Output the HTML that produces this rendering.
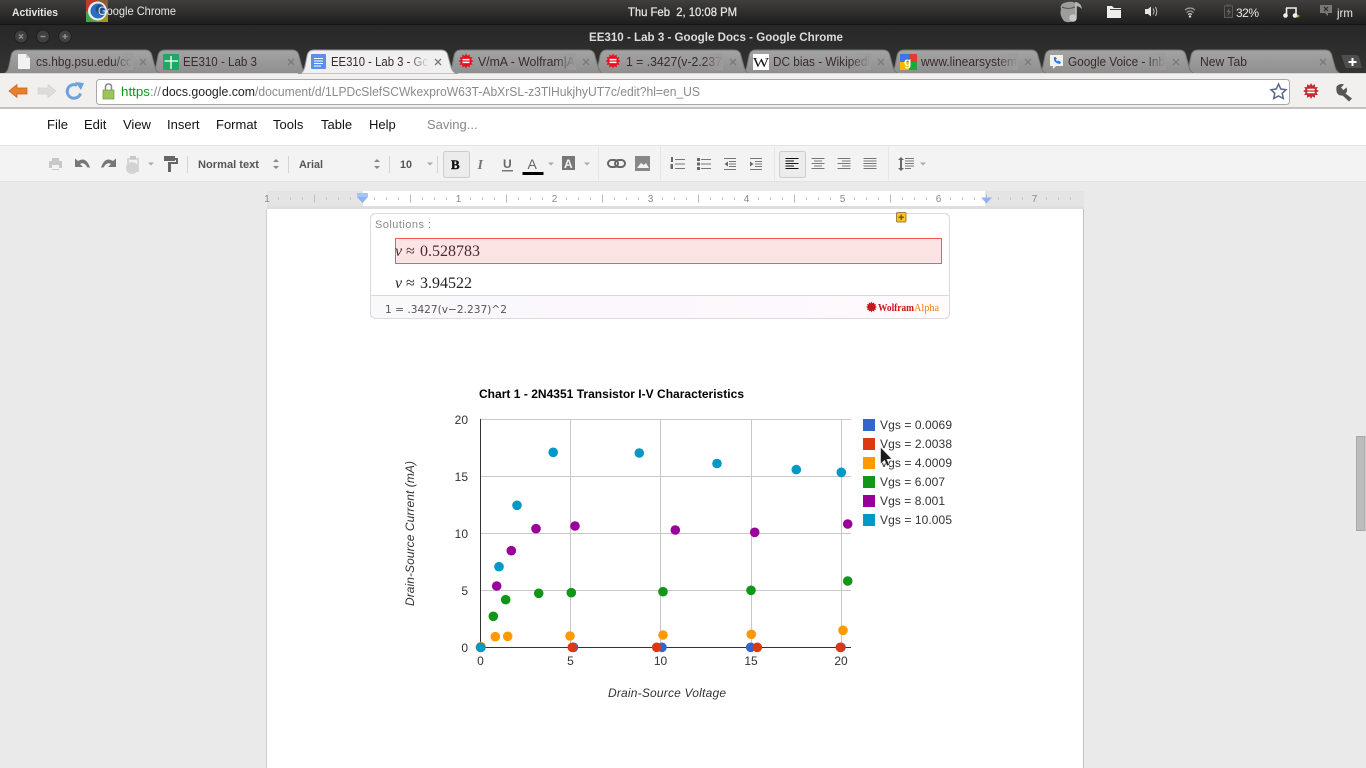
<!DOCTYPE html>
<html>
<head>
<meta charset="utf-8">
<title>EE310 - Lab 3 - Google Docs - Google Chrome</title>
<style>
html,body{margin:0;padding:0;width:1366px;height:768px;overflow:hidden;background:#eaeaea}
svg{display:block;position:absolute;left:0;top:0}
text{font-family:"Liberation Sans",sans-serif;white-space:pre}
.tab{font-size:13px;fill:#3a2a2c}
.mn{font-size:13px;fill:#111}
.ax{font-size:12px;fill:#333}
.lg{font-size:12px;fill:#333}
.rn{font-size:10px;fill:#888;text-anchor:middle}
.m{font-size:16px;font-family:"Liberation Serif",serif}
</style>
</head>
<body>
<svg width="1366" height="768" viewBox="0 0 1366 768" xmlns="http://www.w3.org/2000/svg">
<defs>
<linearGradient id="top" x1="0" y1="0" x2="0" y2="1"><stop offset="0" stop-color="#403f3c"/><stop offset="1" stop-color="#1d1d1c"/></linearGradient>
<linearGradient id="title" x1="0" y1="0" x2="0" y2="1"><stop offset="0" stop-color="#272727"/><stop offset="1" stop-color="#343433"/></linearGradient>
<linearGradient id="tabg" x1="0" y1="0" x2="0" y2="1"><stop offset="0" stop-color="#a4a4a4"/><stop offset="1" stop-color="#8e8e8e"/></linearGradient>
<linearGradient id="tabf" x1="0" y1="0" x2="1" y2="0"><stop offset="0" stop-color="#9b9b9b" stop-opacity="0"/><stop offset="1" stop-color="#9b9b9b"/></linearGradient>
<linearGradient id="actf" x1="0" y1="0" x2="1" y2="0"><stop offset="0" stop-color="#f0f0f0" stop-opacity="0"/><stop offset="1" stop-color="#f0f0f0"/></linearGradient>
<linearGradient id="foot" x1="0" y1="0" x2="1" y2="0"><stop offset="0" stop-color="#f9f8fb"/><stop offset=".5" stop-color="#fcf7fc"/><stop offset="1" stop-color="#fefafe"/></linearGradient>
<path id="tabshape" d="M-8 24C-3 24-1 21 0 16L2 6Q3 0 9 0H136Q142 0 143 6L146 17C147 21 150 24 154 24Z"/>
<path id="star" d="M7.5 0L5.12 1.37L6.5 3.75L3.75 3.75L3.75 6.5L1.37 5.12L0 7.5L-1.37 5.12L-3.75 6.5L-3.75 3.75L-6.5 3.75L-5.12 1.37L-7.5 0L-5.12 -1.37L-6.5 -3.75L-3.75 -3.75L-3.75 -6.5L-1.37 -5.12L0 -7.5L1.37 -5.12L3.75 -6.5L3.75 -3.75L6.5 -3.75L5.12 -1.37Z"/>
<path id="bars" d="M-3.5-1.400H3.500M-3.500 1.400H3.500" stroke="#fff" stroke-width="1.500" fill="none"/>
<path id="x" d="M-3-3L3 3M3-3L-3 3" fill="none" stroke="#7a7a7a" stroke-width="1.300"/>
<path id="ud" d="M-3-2L0-5L3-2ZM-3 2L0 5L3 2Z" fill="#888"/>
<path id="dd" d="M-3-1.500H3L0 1.500Z" fill="#aaa"/>
</defs>

<!-- top bar -->
<rect width="1366" height="25" fill="url(#top)"/>
<rect y="24" width="1366" height="1" fill="#161616"/>
<text x="12" y="16" font-size="11" font-weight="bold" fill="#e4e4e4" textLength="46" lengthAdjust="spacingAndGlyphs">Activities</text>
<rect x="86" y="0" width="11" height="11" fill="#c23a2c"/>
<rect x="86" y="11" width="11" height="11" fill="#44a346"/>
<rect x="97" y="11" width="11" height="11" fill="#a09422"/>
<rect x="97" y="0" width="11" height="11" fill="#8a5a30"/>
<circle cx="97.500" cy="11" r="9.500" fill="#e8eef4"/>
<circle cx="98" cy="11" r="7.500" fill="#2c6fc0"/>
<circle cx="100" cy="9" r="4.500" fill="#1f4e8a"/>
<text x="98" y="15" font-size="12" fill="#e6e6e6" textLength="78" lengthAdjust="spacingAndGlyphs">Google Chrome</text>
<text x="628" y="16" font-size="12" fill="#e6e6e6" stroke="#e6e6e6" stroke-width=".25" textLength="109" lengthAdjust="spacingAndGlyphs">Thu Feb  2, 10:08 PM</text>

<!-- tray -->
<path d="M1062 4Q1067 1 1073 2Q1077 3 1076 7Q1078 14 1074 20Q1069 24 1064 21Q1059 15 1061 9Q1060 6 1062 4Z" fill="#9d9d9d"/>
<path d="M1062 7Q1068 10 1075 7" fill="none" stroke="#555" stroke-width="1"/>
<path d="M1076 2V17" stroke="#c4c4c4" stroke-width="1.500"/><path d="M1076 2Q1081 3 1082 9Q1079 6 1076 6Z" fill="#b4b4b4"/><circle cx="1073" cy="18" r="3.800" fill="#c8c8c8"/>
<path d="M1107 6H1112L1114 8H1121V18H1107Z" fill="#eee"/><rect x="1110" y="9" width="11" height="1" fill="#444"/>
<path d="M1145 9H1148L1151 6.500V16.500L1148 14H1145Z" fill="#e6e6e6"/><path d="M1153 8.500Q1155 11.500 1153 14.500M1155.500 7Q1158 11.500 1155.500 16" fill="none" stroke="#bbb" stroke-width="1"/>
<path d="M1185 10Q1190 6 1195 10M1186.500 12.500Q1190 9.500 1193.500 12.500" fill="none" stroke="#999" stroke-width="1.300"/><path d="M1188 14.500Q1190 13 1192 14.500" fill="none" stroke="#ddd" stroke-width="1.300"/><circle cx="1190" cy="16.500" r="1.200" fill="#ddd"/>
<rect x="1224.500" y="6" width="8" height="11.500" fill="#333" stroke="#5a5a5a"/><rect x="1226.500" y="4.500" width="4" height="1.500" fill="#5a5a5a"/><path d="M1229.500 8L1226.500 12H1228.500L1227.500 16L1231 11H1229Z" fill="#666"/>
<text x="1236" y="17" font-size="12" fill="#e6e6e6" textLength="23" lengthAdjust="spacing">32%</text>
<path d="M1286 8H1296V15" fill="none" stroke="#eee" stroke-width="1.600"/><path d="M1286.500 8V15" stroke="#eee" stroke-width="1.600"/><circle cx="1285.500" cy="15.500" r="2.300" fill="#eee"/><circle cx="1295" cy="15.500" r="2.300" fill="#eee"/><path d="M1297 14V18L1300 16Z" fill="#7eb52a"/>
<path d="M1320 5H1332V13H1328V16L1325 13H1320Z" fill="#777"/><path d="M1324 7L1328 11M1328 7L1324 11" stroke="#2a2a2a" stroke-width="1.200"/>
<text x="1337" y="17" font-size="12" fill="#e6e6e6" textLength="16" lengthAdjust="spacingAndGlyphs">jrm</text>

<!-- title bar -->
<rect y="25" width="1366" height="49" fill="url(#title)"/>
<g fill="#404040" stroke="#202020"><circle cx="21" cy="36.500" r="6.500"/><circle cx="43" cy="36.500" r="6.500"/><circle cx="65" cy="36.500" r="6.500"/></g>
<path d="M19 34.500L23 38.500M23 34.500L19 38.500M40.500 36.500H45.500M62.500 36.500H67.500M65 34V39" stroke="#8e8e8e" stroke-width="1.500"/>
<text x="589" y="41" font-size="12" font-weight="bold" fill="#dcdcdc" textLength="254" lengthAdjust="spacingAndGlyphs">EE310 - Lab 3 - Google Docs - Google Chrome</text>

<!-- tabs -->
<g fill="url(#tabg)" stroke="#777" stroke-width="1">
<use href="#tabshape" x="1189" y="50"/>
<use href="#tabshape" x="1043" y="50"/>
<use href="#tabshape" x="895" y="50"/>
<use href="#tabshape" x="747" y="50"/>
<use href="#tabshape" x="598" y="50"/>
<use href="#tabshape" x="452" y="50"/>
<use href="#tabshape" x="156" y="50"/>
<use href="#tabshape" x="9" y="50"/>
</g>
<use href="#tabshape" x="305" y="50" fill="#f0f0f0" stroke="#999"/>
<rect y="73" width="298" height="1" fill="#d8d8d8"/><rect x="458" y="73" width="908" height="1" fill="#d8d8d8"/>

<path d="M18 54H26L30 58V69H18Z" fill="#f2f2f2"/><path d="M26 54V58H30" fill="#cfcfcf"/>
<rect x="163" y="54" width="16" height="16" rx="1" fill="#1ea866"/><path d="M171 56V69M164.500 61H178" stroke="#fff" stroke-width="1.300"/>
<rect x="311" y="54" width="15" height="15" rx="1" fill="#5b8fe8"/><path d="M314 58.500H323M314 61H323M314 63.500H323M314 66H321" stroke="#fff" stroke-width="1"/>
<g transform="translate(466 61)"><use href="#star" fill="#ea1020"/><use href="#bars"/></g>
<g transform="translate(613 61)"><use href="#star" fill="#ea1020"/><use href="#bars"/></g>
<rect x="753" y="54" width="16" height="16" fill="#fff"/>
<text x="753" y="67" font-size="14" fill="#111" style="font-family:'Liberation Serif',serif" textLength="16" lengthAdjust="spacingAndGlyphs">W</text>
<rect x="900" y="54" width="9" height="8" fill="#3a78e0"/><rect x="909" y="54" width="8" height="8" fill="#e03c30"/><rect x="900" y="62" width="9" height="8" fill="#f5b800"/><rect x="909" y="62" width="8" height="8" fill="#1ea83c"/>
<text x="904" y="66" font-size="12" font-weight="bold" fill="#fff">g</text>
<path d="M1050 55H1063V66H1056L1053 69V66H1050Z" fill="#f4f2e8"/><path d="M1054 57Q1053 63 1060 64L1061 62L1058 60.500L1057 61.500Q1056 60 1056 59.500L1057 58.500L1055.500 57Z" fill="#2f7ae0"/>

<text class="tab" x="36" y="66" textLength="96" lengthAdjust="spacingAndGlyphs">cs.hbg.psu.edu/cc</text>
<text class="tab" x="183" y="66" textLength="74" lengthAdjust="spacingAndGlyphs">EE310 - Lab 3</text>
<text class="tab" x="331" y="66" textLength="97" lengthAdjust="spacingAndGlyphs">EE310 - Lab 3 - Gc</text>
<text class="tab" x="478" y="66" textLength="97" lengthAdjust="spacingAndGlyphs">V/mA - Wolfram|A</text>
<text class="tab" x="626" y="66" textLength="96" lengthAdjust="spacingAndGlyphs">1 = .3427(v-2.237</text>
<text class="tab" x="773" y="66" textLength="97" lengthAdjust="spacingAndGlyphs">DC bias - Wikipedi</text>
<text class="tab" x="921" y="66" textLength="96" lengthAdjust="spacingAndGlyphs">www.linearsystem</text>
<text class="tab" x="1068" y="66" textLength="97" lengthAdjust="spacingAndGlyphs">Google Voice - Inb</text>
<text class="tab" x="1200" y="66" textLength="47" lengthAdjust="spacingAndGlyphs">New Tab</text>
<g fill="url(#tabf)">
<rect x="112" y="53" width="21" height="17"/><rect x="555" y="53" width="21" height="17"/><rect x="702" y="53" width="21" height="17"/><rect x="850" y="53" width="21" height="17"/><rect x="997" y="53" width="21" height="17"/><rect x="1145" y="53" width="21" height="17"/>
</g>
<rect x="408" y="53" width="21" height="17" fill="url(#actf)"/>
<use href="#x" x="143" y="62"/><use href="#x" x="291" y="62"/><use href="#x" x="438" y="62"/><use href="#x" x="586" y="62"/><use href="#x" x="733" y="62"/><use href="#x" x="881" y="62"/><use href="#x" x="1028" y="62"/><use href="#x" x="1176" y="62"/><use href="#x" x="1323" y="62"/>
<path d="M1341 55H1356Q1358 55 1359 57L1362 68H1347Q1345 68 1345 66Z" fill="#4e4e4e"/>
<path d="M1352.500 58V66M1348.500 62H1356.500" stroke="#fff" stroke-width="2"/>

<!-- browser toolbar -->
<rect y="74" width="1366" height="34" fill="#f1f0ef"/>
<rect y="107" width="1366" height="2" fill="#c2c2c2"/>
<path d="M9 91L17 84.500V88H27V94H17V97.500Z" fill="#e8802c" stroke="#c65f1a" stroke-width=".7"/>
<path d="M56 91L48 84.500V88H38V94H48V97.500Z" fill="#dcdcdc" stroke="#d0d0d0" stroke-width=".7"/>
<path d="M80.500 93.500A6.800 6.800 0 1 1 77 85.300" fill="none" stroke="#6ba4dc" stroke-width="3"/>
<path d="M75 82L84 83L81 90Z" fill="#6ba4dc"/>
<rect x="96.500" y="79.500" width="1193" height="25" rx="3" fill="#fff" stroke="#a8a8a8"/>
<path d="M105.500 90V87Q105.500 84 108.500 84Q111.500 84 111.500 87V90" fill="none" stroke="#888" stroke-width="1.500"/>
<rect x="103" y="90" width="11" height="9" fill="#9cc45c" stroke="#6e9a38" stroke-width=".7"/>
<text y="96" font-size="13"><tspan x="121" fill="#0a9a16" textLength="29" lengthAdjust="spacingAndGlyphs">https</tspan><tspan x="150" fill="#888">://</tspan><tspan x="162" fill="#222" textLength="93" lengthAdjust="spacingAndGlyphs">docs.google.com</tspan><tspan x="255" fill="#8a8a8a" textLength="445" lengthAdjust="spacingAndGlyphs">/document/d/1LPDcSlefSCWkexproW63T-AbXrSL-z3TlHukjhyUT7c/edit?hl=en_US</tspan></text>
<path d="M1278.500 84L1280.800 89L1286 89.700L1282.200 93.300L1283.300 98.500L1278.500 96L1273.700 98.500L1274.800 93.300L1271 89.700L1276.200 89Z" fill="#fff" stroke="#5c6a86" stroke-width="1.500"/>
<g transform="translate(1311 91) scale(1.050)"><use href="#star" fill="#c42a30"/><use href="#bars"/></g>
<path d="M1336.500 86.500Q1340 83 1344 84.500L1341 87.500L1343.500 90L1346.500 87.500Q1348 91.500 1345.500 93.500L1352 98.500L1349 101.500L1342.500 95.500Q1338.500 96 1336.800 92.500Q1336 89 1336.500 86.500Z" fill="#555"/>

<!-- docs menu -->
<rect y="109" width="1366" height="36" fill="#fff"/>
<rect y="145" width="1366" height="1" fill="#e4e4e4"/>
<rect y="146" width="1366" height="35" fill="#f3f3f3"/>
<rect y="181" width="1366" height="1" fill="#e2e2e2"/>
<text class="mn" x="47" y="129">File</text><text class="mn" x="84" y="129">Edit</text><text class="mn" x="123" y="129">View</text><text class="mn" x="167" y="129">Insert</text><text class="mn" x="216" y="129">Format</text><text class="mn" x="273" y="129">Tools</text><text class="mn" x="321" y="129">Table</text><text class="mn" x="369" y="129">Help</text>
<text x="427" y="129" font-size="13" fill="#888">Saving...</text>

<!-- docs toolbar -->
<path d="M52 158H59V161H62V168H59V170H52V168H49V161H52Z" fill="#c8c8c8"/><rect x="52" y="165" width="7" height="4" fill="#f3f3f3"/>
<path d="M75 158.500V167H83L80 164Q84 161.500 87.500 167.500H90Q86 156 78 161Z" fill="#777"/>
<path d="M116 158.500V167H108L111 164Q107 161.500 103.500 167.500H101Q105 156 113 161Z" fill="#777"/>
<rect x="127" y="158" width="12" height="14" fill="#d6d6d6"/><rect x="129" y="160" width="8" height="4" fill="#f3f3f3"/><rect x="130" y="156" width="6" height="3" fill="#c6c6c6"/><circle cx="132" cy="168" r="6" fill="#d2d2d2"/>
<use href="#dd" x="151" y="164"/>
<path d="M164 156H175V161H164Z" fill="#666"/><path d="M175 158H178V164H171V172H168V162H176V160H175Z" fill="#666"/>
<g fill="#d4d4d4"><rect x="187" y="156" width="1" height="17"/><rect x="288" y="156" width="1" height="17"/><rect x="389" y="156" width="1" height="17"/><rect x="437" y="156" width="1" height="17"/><rect x="598" y="147" width="1" height="33" fill="#e6e6e6"/><rect x="660" y="147" width="1" height="33" fill="#e6e6e6"/><rect x="774" y="147" width="1" height="33" fill="#e6e6e6"/><rect x="888" y="147" width="1" height="33" fill="#e6e6e6"/></g>
<text x="198" y="168" font-size="11" font-weight="bold" fill="#555" textLength="61" lengthAdjust="spacingAndGlyphs">Normal text</text>
<use href="#ud" x="276" y="164"/>
<text x="299" y="168" font-size="11" font-weight="bold" fill="#555" textLength="24" lengthAdjust="spacingAndGlyphs">Arial</text>
<use href="#ud" x="377" y="164"/>
<text x="400" y="168" font-size="11" font-weight="bold" fill="#555" textLength="12" lengthAdjust="spacingAndGlyphs">10</text>
<use href="#dd" x="430" y="164"/>
<rect x="443.500" y="151.500" width="26" height="26" rx="2" fill="#ececec" stroke="#ccc"/>
<text x="451" y="169" font-size="13" font-weight="bold" fill="#111" style="font-family:'Liberation Serif',serif;stroke:#111;stroke-width:.4">B</text>
<text x="477.500" y="169" font-size="14" font-weight="bold" font-style="italic" fill="#777" style="font-family:'Liberation Serif',serif">I</text>
<text x="503" y="168" font-size="12" font-weight="bold" fill="#666">U</text><rect x="502" y="170" width="11" height="1.500" fill="#777"/>
<text x="527.500" y="169" font-size="14" fill="#666">A</text><rect x="522.500" y="172" width="21" height="3" fill="#000"/>
<use href="#dd" x="551" y="164"/>
<rect x="562" y="156" width="13" height="14" fill="#777"/><text x="564" y="168" font-size="12" font-weight="bold" fill="#f3f3f3">A</text>
<use href="#dd" x="587" y="164"/>
<rect x="608" y="160" width="10" height="7" rx="3.500" fill="none" stroke="#666" stroke-width="2"/><rect x="615" y="160" width="10" height="7" rx="3.500" fill="none" stroke="#666" stroke-width="2"/>
<rect x="635" y="156" width="15" height="15" fill="#888"/><path d="M637 168L641 163L644 165L646 163L649 168Z" fill="#f3f3f3"/>
<g stroke="#777" stroke-width="1" fill="none">
<path d="M675 159.500H685M675 164H685M675 168.500H685"/>
<path d="M701 159.500H711M701 164H711M701 168.500H711"/>
<path d="M724 158.500H736M729 161.500H736M729 164H736M729 166.500H736M724 169.500H736"/>
<path d="M750 158.500H762M755 161.500H762M755 164H762M755 166.500H762M750 169.500H762"/>
</g>
<path d="M671 157H673V162H671ZM670.500 164H673V169H670.500Z" fill="#666"/>
<path d="M697 158H700V161H697ZM697 162.500H700V165.500H697ZM697 167H700V170H697Z" fill="#666"/>
<path d="M728 161.500V166.500L724.500 164ZM750 161.500V166.500L753.500 164Z" fill="#666"/>
<rect x="779.500" y="151.500" width="26" height="26" rx="2" fill="#ececec" stroke="#ccc"/>
<path d="M785.500 158.500H798.500M785.500 161H794M785.500 163.500H798.500M785.500 166H794M785.500 168.500H798.500" stroke="#111" stroke-width="1" fill="none"/>
<g stroke="#777" stroke-width="1" fill="none">
<path d="M811.500 158.500H824.500M814 161H822M811.500 163.500H824.500M814 166H822M811.500 168.500H824.500"/>
<path d="M837.500 158.500H850.500M842 161H850.500M837.500 163.500H850.500M842 166H850.500M837.500 168.500H850.500"/>
<path d="M863.500 158.500H876.500M863.500 161H876.500M863.500 163.500H876.500M863.500 166H876.500M863.500 168.500H876.500"/>
<path d="M905 158.500H914M905 161H914M905 163.500H914M905 166H914M905 168.500H911"/>
</g>
<path d="M901 157L904 160H902V168H904L901 171L898 168H900V160H898Z" fill="#666"/>
<use href="#dd" x="923" y="164"/>

<!-- ruler -->
<rect x="267" y="191" width="817" height="15" fill="#e4e4e4"/>
<rect x="363" y="191" width="622" height="15" fill="#fff"/>
<rect x="267" y="206" width="817" height="3" fill="#dedede"/>
<line x1="278" y1="198.500" x2="1078" y2="198.500" stroke="#c8c8c8" stroke-width="3" stroke-dasharray="1 11"/>
<line x1="314" y1="198.500" x2="1078" y2="198.500" stroke="#bdbdbd" stroke-width="8" stroke-dasharray="1 95"/>
<g fill="#fff"><rect x="454" y="193" width="9" height="11"/><rect x="550" y="193" width="9" height="11"/><rect x="646" y="193" width="9" height="11"/><rect x="742" y="193" width="9" height="11"/><rect x="838" y="193" width="9" height="11"/><rect x="934" y="193" width="9" height="11"/></g>
<rect x="1030" y="193" width="9" height="11" fill="#e4e4e4"/>
<text class="rn" x="267" y="202">1</text><text class="rn" x="458.500" y="202">1</text><text class="rn" x="554.500" y="202">2</text><text class="rn" x="650.500" y="202">3</text><text class="rn" x="746.500" y="202">4</text><text class="rn" x="842.500" y="202">5</text><text class="rn" x="938.500" y="202">6</text><text class="rn" x="1034.500" y="202">7</text>
<rect x="357" y="193" width="11" height="4" fill="#a4c4fa"/>
<path d="M357 197H368L362.500 203Z" fill="#8fb4f4"/>
<path d="M981 197.500H992L986.500 203.500Z" fill="#8fb4f4"/>

<!-- page -->
<rect x="267" y="209" width="816" height="559" fill="#fff"/>
<rect x="266" y="209" width="1" height="559" fill="#cfcfcf"/>
<rect x="1083" y="209" width="1" height="559" fill="#c0c0c0"/>

<!-- wolfram pod -->
<rect x="370.500" y="213.500" width="579" height="105" rx="5" fill="#fff" stroke="#dcdcdc"/>
<path d="M371 295.500H949V313Q949 318 944 318H376Q371 318 371 313Z" fill="url(#foot)"/>
<path d="M371 295.500H949" stroke="#d8d8d8"/>
<rect x="370.500" y="213.500" width="579" height="105" rx="5" fill="none" stroke="#dcdcdc"/>
<text x="375" y="228" font-size="11" fill="#8a8a8a" textLength="56" lengthAdjust="spacing">Solutions :</text>
<rect x="395.500" y="238.500" width="546" height="25" fill="#fde4e4" stroke="#f45a5a"/>
<text class="m" x="395" y="256" font-style="italic" fill="#4a2a2c">v</text>
<text class="m" x="406" y="256" font-size="13" fill="#4a2a2c">≈</text>
<text class="m" x="420" y="256" fill="#4a2a2c" textLength="60">0.528783</text>
<text class="m" x="395" y="288" font-style="italic" fill="#222">v</text>
<text class="m" x="406" y="288" font-size="13" fill="#222">≈</text>
<text class="m" x="420" y="288" fill="#222" textLength="52">3.94522</text>
<text x="385" y="313" font-size="11" fill="#555" style="font-family:'DejaVu Sans',sans-serif" textLength="122" lengthAdjust="spacingAndGlyphs">1 = .3427(v−2.237)^2</text>
<use href="#star" transform="translate(871.500 307) scale(.72)" fill="#c8141c"/>
<text x="878" y="311" font-size="10" font-weight="bold" fill="#c8141c" style="font-family:'Liberation Serif',serif" textLength="36" lengthAdjust="spacingAndGlyphs">Wolfram</text>
<text x="914" y="311" font-size="10" fill="#f08010" style="font-family:'Liberation Serif',serif" textLength="25" lengthAdjust="spacingAndGlyphs">Alpha</text>
<rect x="896.500" y="212.500" width="9.500" height="9.500" rx="1" fill="#fcc219" stroke="#9c8350"/>
<path d="M901.200 214.500V220M898.500 217.200H904" stroke="#5a4010" stroke-width="1.100"/>

<!-- chart -->
<text x="479" y="398" font-size="12" font-weight="bold" fill="#000" textLength="265">Chart 1 - 2N4351 Transistor I-V Characteristics</text>
<g stroke="#c8c8c8" stroke-width="1" fill="none">
<path d="M481 419.500H851M481 476.500H851M481 533.500H851M481 590.500H851"/>
<path d="M570.500 420V647M660.500 420V647M751.500 420V647M841.500 420V647"/>
</g>
<path d="M480.500 419V648M480 647.500H851" stroke="#333" stroke-width="1" fill="none"/>
<g text-anchor="end">
<text class="ax" x="468" y="424">20</text><text class="ax" x="468" y="481">15</text><text class="ax" x="468" y="538">10</text><text class="ax" x="468" y="595">5</text><text class="ax" x="468" y="652">0</text>
</g>
<g text-anchor="middle">
<text class="ax" x="480.500" y="665">0</text><text class="ax" x="570.500" y="665">5</text><text class="ax" x="660.500" y="665">10</text><text class="ax" x="751" y="665">15</text><text class="ax" x="841" y="665">20</text>
</g>
<text x="608" y="697" font-size="12" font-style="italic" fill="#333" textLength="118">Drain-Source Voltage</text>
<text transform="translate(414 606) rotate(-90)" font-size="12" font-style="italic" fill="#333" textLength="145">Drain-Source Current (mA)</text>

<g fill="#3366cc"><circle cx="481" cy="647.300" r="4.800"/><circle cx="573.500" cy="647.300" r="4.800"/><circle cx="662" cy="647.300" r="4.800"/><circle cx="750.700" cy="647.300" r="4.800"/><circle cx="841" cy="647.300" r="4.800"/></g>
<g fill="#dc3912"><circle cx="480.500" cy="647.300" r="4.800"/><circle cx="572.300" cy="647.300" r="4.800"/><circle cx="656.700" cy="647.300" r="4.800"/><circle cx="757.300" cy="647.300" r="4.800"/><circle cx="840.300" cy="647.300" r="4.800"/></g>
<g fill="#ff9900"><circle cx="481" cy="646.500" r="4.800"/><circle cx="495.300" cy="636.700" r="4.800"/><circle cx="507.700" cy="636.300" r="4.800"/><circle cx="570" cy="636" r="4.800"/><circle cx="663" cy="635" r="4.800"/><circle cx="751.300" cy="634.300" r="4.800"/><circle cx="843" cy="630.300" r="4.800"/></g>
<g fill="#109618"><circle cx="493.300" cy="616.300" r="4.800"/><circle cx="505.700" cy="599.700" r="4.800"/><circle cx="538.700" cy="593.300" r="4.800"/><circle cx="571.300" cy="592.700" r="4.800"/><circle cx="663" cy="591.700" r="4.800"/><circle cx="751" cy="590.300" r="4.800"/><circle cx="847.700" cy="581" r="4.800"/></g>
<g fill="#990099"><circle cx="496.700" cy="586" r="4.800"/><circle cx="511.300" cy="550.700" r="4.800"/><circle cx="536" cy="528.700" r="4.800"/><circle cx="575" cy="526" r="4.800"/><circle cx="675.300" cy="530" r="4.800"/><circle cx="754.700" cy="532.300" r="4.800"/><circle cx="847.700" cy="524" r="4.800"/></g>
<g fill="#0099c6"><circle cx="480.700" cy="647.300" r="4.800"/><circle cx="499" cy="566.700" r="4.800"/><circle cx="517" cy="505.300" r="4.800"/><circle cx="553.200" cy="452.300" r="4.800"/><circle cx="639.300" cy="453" r="4.800"/><circle cx="717" cy="463.500" r="4.800"/><circle cx="796.300" cy="469.600" r="4.800"/><circle cx="841.300" cy="472.300" r="4.800"/></g>

<rect x="863" y="419" width="12" height="12" fill="#3366cc"/><rect x="863" y="438" width="12" height="12" fill="#dc3912"/><rect x="863" y="457" width="12" height="12" fill="#ff9900"/><rect x="863" y="476" width="12" height="12" fill="#109618"/><rect x="863" y="495" width="12" height="12" fill="#990099"/><rect x="863" y="514" width="12" height="12" fill="#0099c6"/>
<text class="lg" x="880" y="429" textLength="72">Vgs = 0.0069</text><text class="lg" x="880" y="448" textLength="72">Vgs = 2.0038</text><text class="lg" x="880" y="467" textLength="72">Vgs = 4.0009</text><text class="lg" x="880" y="486" textLength="65">Vgs = 6.007</text><text class="lg" x="880" y="505" textLength="65">Vgs = 8.001</text><text class="lg" x="880" y="524" textLength="72">Vgs = 10.005</text>

<!-- cursor -->
<path d="M880.500 447V464L884.500 460.500L887 466L889.500 465L887 459.500L892 459Z" fill="#1c1c1c" stroke="#eee" stroke-width=".7"/>

<!-- scrollbar -->
<rect x="1356.500" y="436.500" width="8.500" height="94" fill="#bcbcbc" stroke="#a8a8a8"/>
</svg>
</body>
</html>
